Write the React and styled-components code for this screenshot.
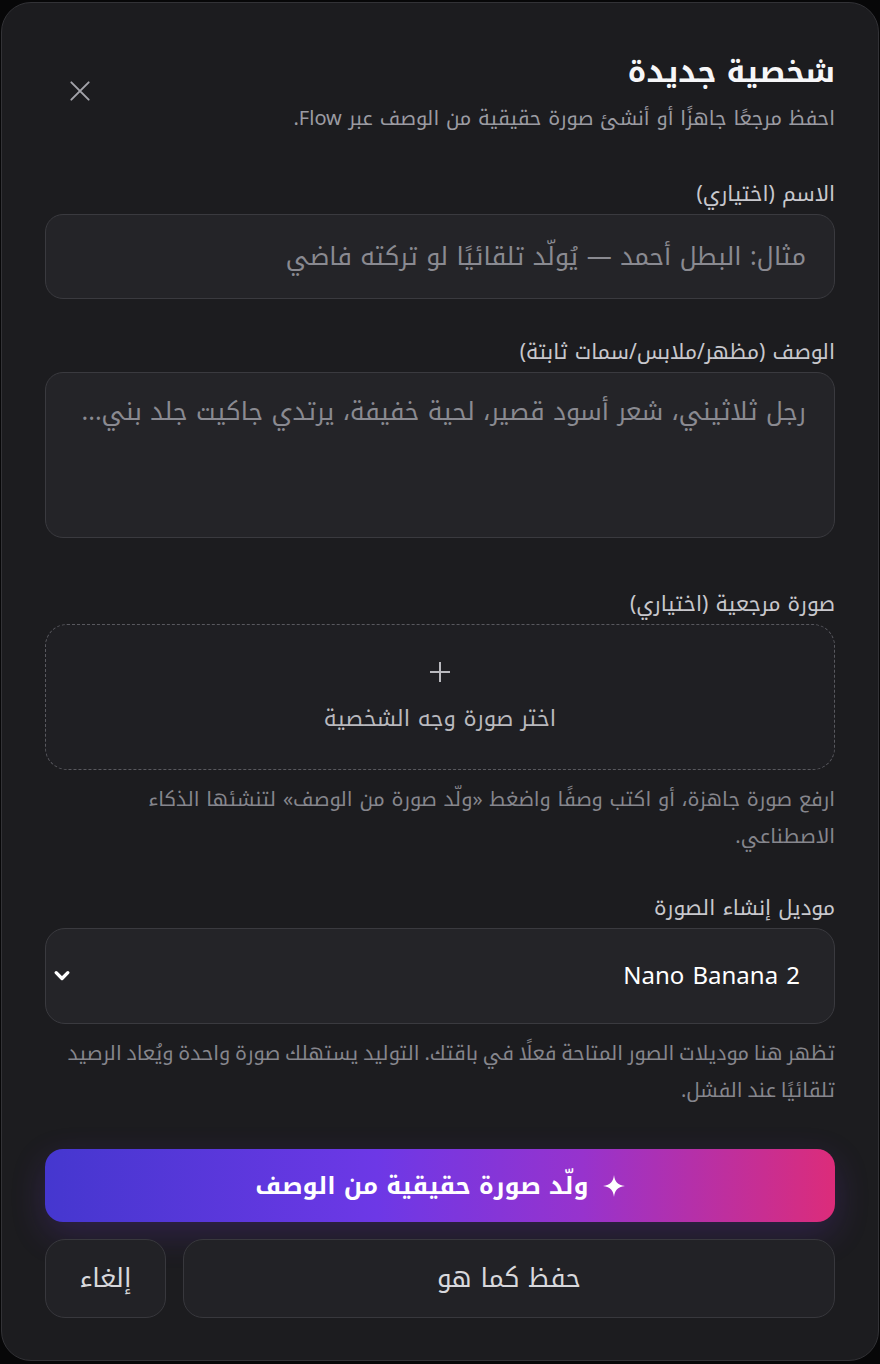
import React from 'react'
import styled, { createGlobalStyle } from 'styled-components'

const GlobalStyle = createGlobalStyle`
  * { box-sizing: border-box; }
  body {
    margin: 0;
    background: #070708;
    font-family: "Noto Kufi Arabic", "Noto Sans Arabic", "DejaVu Sans", sans-serif;
    direction: rtl;
  }
`

const Modal = styled.section`
  width: 878px;
  margin: 2px 1px 2px;
  background: #1c1c1f;
  border: 1px solid #323236;
  border-radius: 30px;
  padding: 49px 43px 42px;
`

const Header = styled.header`
  display: flex;
  justify-content: space-between;
  align-items: flex-start;
  margin-bottom: 46px;
`

const Title = styled.h2`
  margin: 0;
  font-size: 30px;
  font-weight: 700;
  line-height: 40px;
  color: #f6f6f8;
`

const Subtitle = styled.p`
  margin: 11px 0 0;
  font-size: 20px;
  line-height: 30px;
  color: #9b9ba2;
`

const CloseButton = styled.button`
  background: none;
  border: 0;
  padding: 0;
  margin: 24px 0 0 20px;
  width: 30px;
  height: 30px;
  display: flex;
  align-items: center;
  justify-content: center;
  color: #a3a3aa;
  cursor: pointer;
`

const Field = styled.div`
  margin-top: ${p => p.$gap || 0}px;
`

const Label = styled.label`
  display: block;
  font-size: 21px;
  line-height: 30px;
  color: #c8c8cd;
  margin-bottom: 5px;
`

const boxBase = `
  width: 100%;
  background: #242428;
  border: 1px solid #3a3a3f;
  color: #ececef;
  font-family: inherit;
  direction: rtl;
  outline: none;
`

const TextInput = styled.input`
  ${boxBase}
  height: 85px;
  border-radius: 18px;
  padding: 0 28px;
  font-size: 25px;
  &::placeholder { color: #8a8a91; }
`

const TextArea = styled.textarea`
  ${boxBase}
  display: block;
  height: 166px;
  border-radius: 18px;
  padding: 21px 28px;
  font-size: 25px;
  line-height: 36px;
  resize: none;
  &::placeholder { color: #8a8a91; }
`

const DropZone = styled.div`
  height: 146px;
  border: 1.5px dashed #58585e;
  border-radius: 22px;
  background: #1f1f23;
  display: flex;
  flex-direction: column;
  align-items: center;
  justify-content: center;
  gap: 20px;
  color: #b9b9be;
  font-size: 22px;
  line-height: 30px;
  cursor: pointer;
`

const Hint = styled.p`
  margin: 11px 0 0;
  font-size: 20px;
  line-height: 37px;
  color: #86868d;
  word-spacing: ${p => (p.$tight ? '-2px' : 'normal')};
`

const Select = styled.div`
  height: 96px;
  border-radius: 20px;
  background: #242428;
  border: 1px solid #3a3a3f;
  display: flex;
  align-items: center;
  justify-content: space-between;
  padding: 0 34px 0 6px;
  color: #ffffff;
  font-size: 24px;
  cursor: pointer;
`

const GenerateButton = styled.button`
  width: 100%;
  height: 73px;
  margin-top: 40px;
  border: 0;
  border-radius: 18px;
  background: linear-gradient(90deg, #4537cf 0%, #6d38e6 42%, #9733cd 68%, #dc2c7a 100%);
  box-shadow: 0 12px 34px rgba(118, 54, 220, 0.22);
  color: #ffffff;
  font-family: inherit;
  font-size: 24px;
  font-weight: 700;
  display: flex;
  align-items: center;
  justify-content: center;
  gap: 14px;
  cursor: pointer;
`

const Actions = styled.div`
  display: flex;
  gap: 17px;
  margin-top: 17px;
`

const GhostButton = styled.button`
  flex: ${p => (p.$grow ? 1 : '0 0 121px')};
  height: 79px;
  border-radius: 20px;
  background: #222226;
  border: 1px solid #38383d;
  color: #d8d8dc;
  font-family: inherit;
  font-size: 26px;
  cursor: pointer;
`

const Sparkle = () => (
  <svg width="22" height="22" viewBox="0 0 24 24" fill="#fff">
    <path d="M12 0 C12.8 6.5 15.5 11.2 24 12 C15.5 12.8 12.8 17.5 12 24 C11.2 17.5 8.5 12.8 0 12 C8.5 11.2 11.2 6.5 12 0 Z" />
  </svg>
)

export default function App() {
  return (
    <>
      <GlobalStyle />
      <Modal>
        <Header>
          <div>
            <Title>شخصية جديدة</Title>
            <Subtitle>احفظ مرجعًا جاهزًا أو أنشئ صورة حقيقية من الوصف عبر Flow.</Subtitle>
          </div>
          <CloseButton aria-label="إغلاق">
            <svg width="26" height="26" viewBox="0 0 24 24" fill="none" stroke="currentColor" strokeWidth="1.8" strokeLinecap="round">
              <path d="M4 4 L20 20 M20 4 L4 20" />
            </svg>
          </CloseButton>
        </Header>

        <Field>
          <Label>الاسم (اختياري)</Label>
          <TextInput placeholder="مثال: البطل أحمد — يُولّد تلقائيًا لو تركته فاضي" />
        </Field>

        <Field $gap={38}>
          <Label>الوصف (مظهر/ملابس/سمات ثابتة)</Label>
          <TextArea placeholder="رجل ثلاثيني، شعر أسود قصير، لحية خفيفة، يرتدي جاكيت جلد بني..." />
        </Field>

        <Field $gap={51}>
          <Label>صورة مرجعية (اختياري)</Label>
          <DropZone>
            <svg width="24" height="24" viewBox="0 0 24 24" fill="none" stroke="#b9b9be" strokeWidth="2">
              <path d="M12 2 V22 M2 12 H22" />
            </svg>
            <span>اختر صورة وجه الشخصية</span>
          </DropZone>
          <Hint>ارفع صورة جاهزة، أو اكتب وصفًا واضغط «ولّد صورة من الوصف» لتنشئها الذكاء الاصطناعي.</Hint>
        </Field>

        <Field $gap={38}>
          <Label>موديل إنشاء الصورة</Label>
          <Select>
            <span>Nano Banana 2</span>
            <svg width="20" height="20" viewBox="0 0 24 24" fill="none" stroke="#fff" strokeWidth="4" strokeLinecap="round" strokeLinejoin="round">
              <path d="M5 8 L12 15 L19 8" />
            </svg>
          </Select>
          <Hint $tight>تظهر هنا موديلات الصور المتاحة فعلًا في باقتك. التوليد يستهلك صورة واحدة ويُعاد الرصيد تلقائيًا عند الفشل.</Hint>
        </Field>

        <GenerateButton>
          <Sparkle />
          <span>ولّد صورة حقيقية من الوصف</span>
        </GenerateButton>

        <Actions>
          <GhostButton $grow>حفظ كما هو</GhostButton>
          <GhostButton>إلغاء</GhostButton>
        </Actions>
      </Modal>
    </>
  )
}
